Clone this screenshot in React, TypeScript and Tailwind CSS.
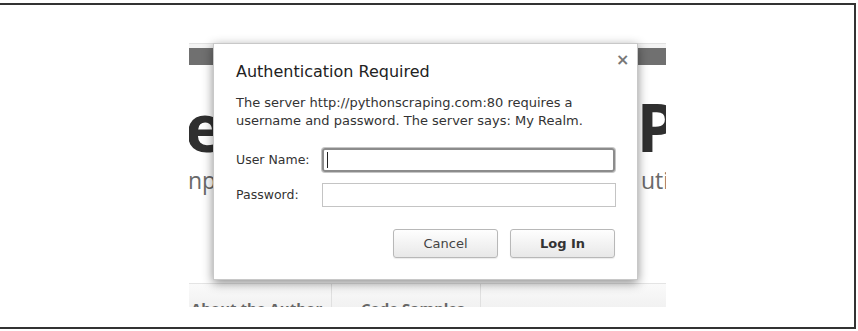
import React from "react";

const font = { fontFamily: '"DejaVu Sans", "Liberation Sans", sans-serif' };

function BackgroundPage() {
  return (
    <div className="w-[477px] h-[264px] relative overflow-hidden bg-white border-t border-[#e2e2e2]">
      <div className="h-[4px] bg-[#f4f4f4]" />
      <div className="h-[17px] bg-[#707070]" />
      <div
        className="flex justify-between h-[70px] mt-[26px] text-[66px] leading-[70px] font-bold text-[#2f2f2f]"
        style={{ fontFamily: '"Open Sans", sans-serif' }}
      >
        <span className="-ml-[4px]">e</span>
        <span className="-mr-[12px]">P</span>
      </div>
      <div
        className="flex justify-between h-[30px] mt-[4px] text-[23px] leading-[30px] text-[#6a6a6a]"
        style={{ fontFamily: '"Open Sans", sans-serif' }}
      >
        <span className="-ml-[1px]">np</span>
        <span className="-mr-[3px]">uti</span>
      </div>
      <div
        className="absolute left-0 right-0 top-[239px] h-[30px] flex border-t border-[#e4e4e4] bg-gradient-to-b from-[#fafafa] to-[#efefef] text-[15px] font-bold text-[#666]"
        style={{ fontFamily: '"Open Sans", sans-serif' }}
      >
        <div className="w-[143px] pl-[2px] pt-[13px] border-r border-[#e0e0e0] whitespace-nowrap">
          About the Author
        </div>
        <div className="w-[149px] pl-[29px] pt-[13px] border-r border-[#e0e0e0] whitespace-nowrap">
          Code Samples
        </div>
        <div className="flex-1" />
      </div>
    </div>
  );
}

function Dialog() {
  return (
    <div
      className="absolute left-[24px] top-0 w-[425px] h-[237px] bg-white border border-[#c8c8c8] shadow-[0_3px_10px_rgba(0,0,0,0.45)] pl-[22px] pr-[21px] pt-[18px] text-[#333]"
      style={font}
    >
      <span className="absolute left-[402px] top-[6px] text-[16px] leading-[20px] font-bold text-[#777]">
        ×
      </span>
      <div className="text-[16px] leading-[20px] text-[#222]">Authentication Required</div>
      <div className="mt-[12px] text-[13px] leading-[18px]">
        The server http://pythonscraping.com:80 requires a
        <br />
        username and password. The server says: My Realm.
      </div>
      <div className="mt-[17px] flex items-center h-[26px] text-[12.5px]">
        <span className="w-[85px]">User Name:</span>
        <div className="w-[296px] h-[26px] p-px">
          <div className="w-full h-full border-2 border-[#8c8c8c] rounded-[3px] shadow-[0_0_0_1px_#c6c6c6] flex items-center pl-[3px]">
            <div className="w-px h-[16px] bg-[#222]" />
          </div>
        </div>
      </div>
      <div className="mt-[10px] flex items-center h-[24px] text-[12.5px]">
        <span className="w-[86px]">Password:</span>
        <div className="w-[295px] h-[24px] border border-[#c4c4c4]" />
      </div>
      <div className="mt-[22px] flex justify-end gap-[12px] pr-[1px]">
        <button className="w-[105px] h-[29px] rounded-[3px] border border-[#b8b8b8] bg-gradient-to-b from-[#fefefe] to-[#e8e8e8] shadow-[0_1px_1px_rgba(0,0,0,0.08)] text-[13px] text-[#444]">
          Cancel
        </button>
        <button className="w-[105px] h-[29px] rounded-[3px] border border-[#b8b8b8] bg-gradient-to-b from-[#fefefe] to-[#e8e8e8] shadow-[0_1px_1px_rgba(0,0,0,0.08)] text-[13px] font-bold text-[#333]">
          Log In
        </button>
      </div>
    </div>
  );
}

export default function App() {
  return (
    <div className="w-[858px] h-[331px] bg-white overflow-hidden">
      <div className="mt-[3px] w-[856px] h-[326px] border-t-2 border-r-2 border-b-2 border-[#333] pl-[189px] pt-[38px]">
        <div className="relative w-[477px]">
          <BackgroundPage />
          <Dialog />
        </div>
      </div>
    </div>
  );
}
